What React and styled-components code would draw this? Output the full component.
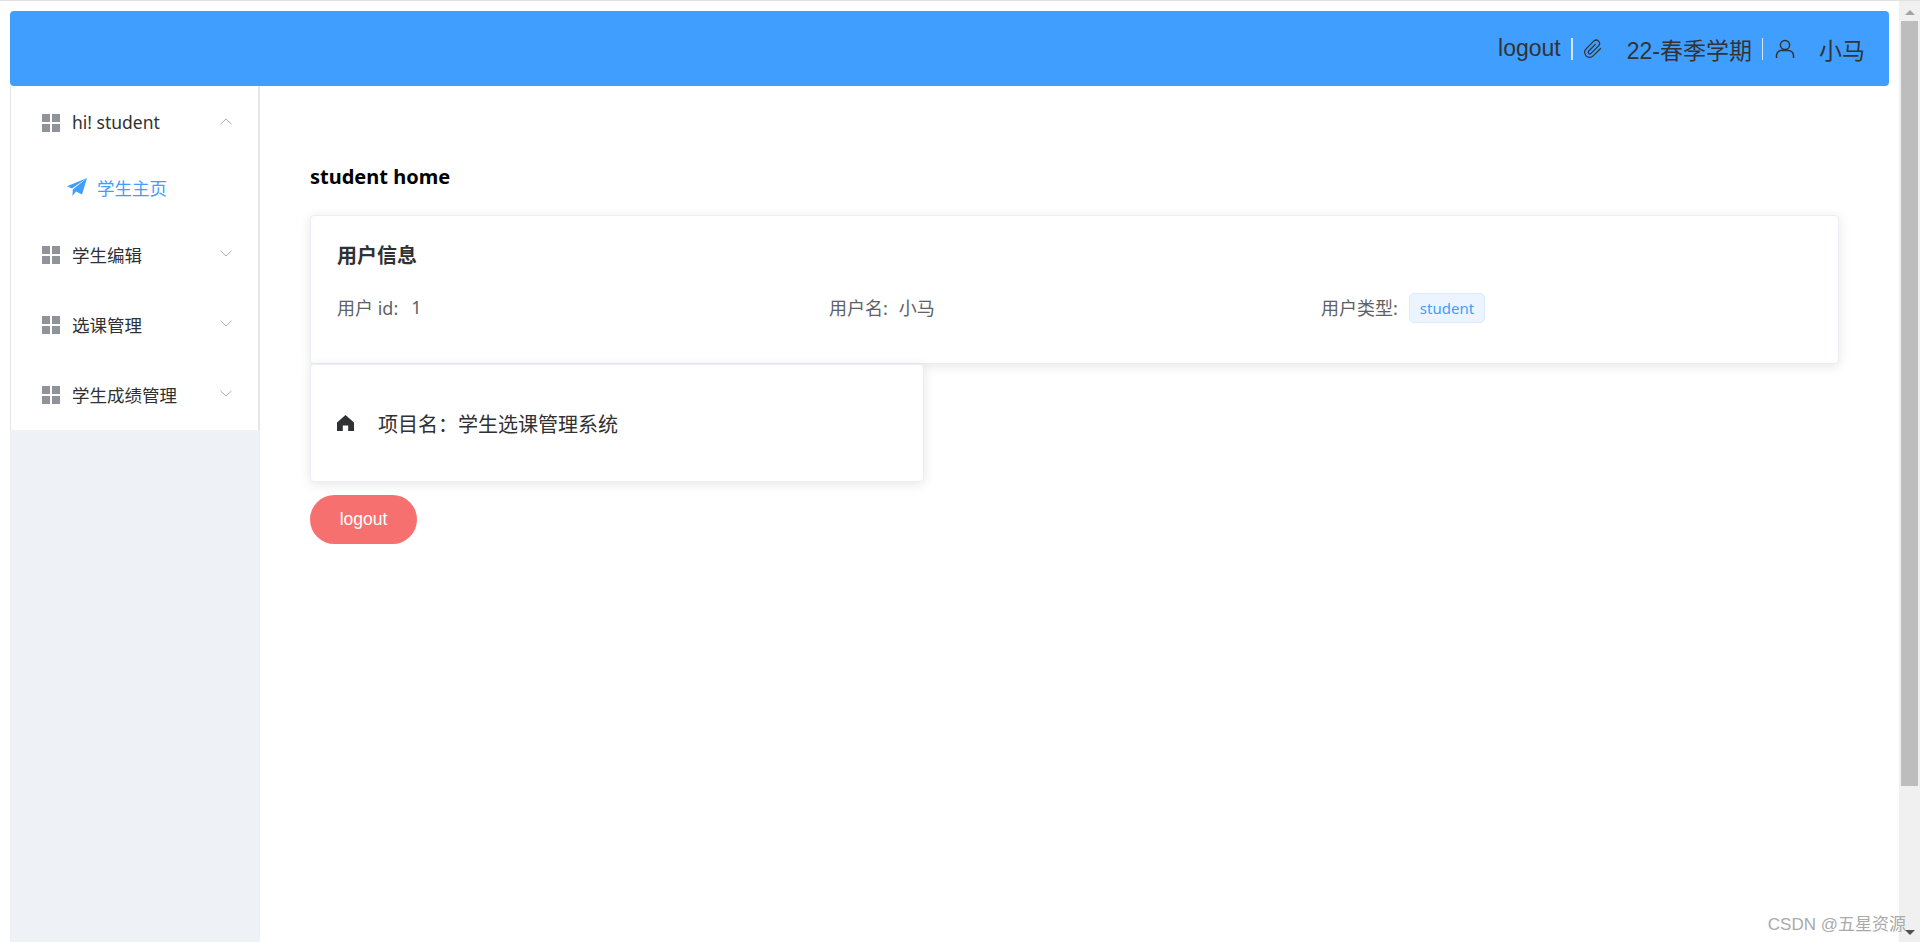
import React from 'react';
import styled, { createGlobalStyle } from 'styled-components';

const CJK = `"Noto Sans", "Noto Sans CJK SC", sans-serif`;
const ARIAL = `"Liberation Sans", "Noto Sans CJK SC", sans-serif`;

const menus = [
    { title: 'hi! student', open: true, children: ['学生主页'] },
    { title: '学生编辑' },
    { title: '选课管理' },
    { title: '学生成绩管理' }
];

const GridIcon = () => (
    <MenuIcon viewBox="0 0 18 18">
        <rect x="0" y="0" width="8" height="8" />
        <rect x="10" y="0" width="8" height="8" />
        <rect x="0" y="10" width="8" height="8" />
        <rect x="10" y="10" width="8" height="8" />
    </MenuIcon>
);

const Chevron = ({ up }) => (
    <ChevronIcon viewBox="0 0 12 7" $up={up}>
        <path d="M0.5 0.8 L6 6 L11.5 0.8" />
    </ChevronIcon>
);

const App = () => (
    <>
        <GlobalStyle />
        <Shell>
            <Page>
                <Header>
                    <span>logout</span>
                    <Divider $w={2} $ml={10} />
                    <HeaderIcon viewBox="0 0 24 24" $ml={10}>
                        <path d="M21.4 11.1l-9.2 9.2a6 6 0 0 1-8.5-8.5l9.2-9.2a4 4 0 0 1 5.7 5.7l-9.2 9.2a2 2 0 0 1-2.8-2.8l8.5-8.5" />
                    </HeaderIcon>
                    <HeaderText $ml={24}>22-春季学期</HeaderText>
                    <Divider $w={1} $ml={10} />
                    <HeaderIcon viewBox="0 0 20 20" $ml={12}>
                        <circle cx="10" cy="6" r="4.6" />
                        <path d="M1.5 19v-2.5a5 5 0 0 1 5-5h7a5 5 0 0 1 5 5V19" />
                    </HeaderIcon>
                    <HeaderText $ml={24}>小马</HeaderText>
                </Header>
                <Content>
                    <Sidebar>
                        <Menu>
                            {menus.map(m => (
                                <li key={m.title}>
                                    <MenuTitle>
                                        <GridIcon />
                                        <MenuLabel>{m.title}</MenuLabel>
                                        <Chevron up={m.open} />
                                    </MenuTitle>
                                    {m.children && m.children.map(c => (
                                        <MenuItem key={c}>
                                            <svg width="20" height="18" viewBox="0 0 20 18" fill="#409eff">
                                                <path d="M20 0 L0 8.2 L5 10.6 Z" />
                                                <path d="M20 0 L5.8 11.4 L5.4 18 L9 13.6 L15 16.6 Z" />
                                            </svg>
                                            <span>{c}</span>
                                        </MenuItem>
                                    ))}
                                </li>
                            ))}
                        </Menu>
                    </Sidebar>
                    <Main>
                        <PageTitle>student home</PageTitle>
                        <InfoCard>
                            <CardTitle>用户信息</CardTitle>
                            <InfoRow>
                                <InfoCell>用户 id:<InfoValue $ml={13}>1</InfoValue></InfoCell>
                                <InfoCell>用户名:<InfoValue $ml={11}>小马</InfoValue></InfoCell>
                                <InfoCell>
                                    用户类型:
                                    <Tag>student</Tag>
                                </InfoCell>
                            </InfoRow>
                        </InfoCard>
                        <ProjectCard>
                            <svg width="17" height="16" viewBox="0 0 17 16" fill="#303133">
                                <path d="M8.5 0 L17 7.4 L17 16 L11.2 16 L11.2 10.4 L5.8 10.4 L5.8 16 L0 16 L0 7.4 Z" />
                            </svg>
                            <span>项目名：学生选课管理系统</span>
                        </ProjectCard>
                        <LogoutButton>logout</LogoutButton>
                    </Main>
                </Content>
                <Watermark>CSDN @五星资源</Watermark>
            </Page>
            <Scrollbar>
                <ArrowUp />
                <Thumb />
                <ArrowDown />
            </Scrollbar>
        </Shell>
    </>
);

const GlobalStyle = createGlobalStyle`
    html, body {
        margin: 0;
        height: 100%;
        overflow: hidden;
        background: #fff;
    }
    #root {
        height: 100%;
    }
`;

const Shell = styled.div`
    display: flex;
    height: 942px;
    box-sizing: border-box;
    border-top: 1px solid #e0e0e0;
`;

const Page = styled.div`
    position: relative;
    flex: 1;
    min-width: 0;
    display: flex;
    flex-direction: column;
    padding: 10px 10px 0;
`;

const Header = styled.header`
    flex: none;
    height: 75px;
    display: flex;
    align-items: center;
    justify-content: flex-end;
    padding-right: 24px;
    background: #409eff;
    border-radius: 4px;
    color: #333;
    font-family: ${ARIAL};
    font-size: 23px;
`;

const HeaderText = styled.span`
    margin-left: ${p => p.$ml}px;
`;

const Divider = styled.i`
    width: ${p => p.$w}px;
    height: 22px;
    margin-left: ${p => p.$ml}px;
    background: #d5e6fb;
`;

const HeaderIcon = styled.svg`
    width: 20px;
    height: 20px;
    margin-left: ${p => p.$ml}px;
    fill: none;
    stroke: #333;
    stroke-width: 1.5;
`;

const Content = styled.div`
    flex: 1;
    display: flex;
    min-height: 0;
`;

const Sidebar = styled.aside`
    flex: none;
    width: 250px;
    background: #eef1f6;
`;

const Menu = styled.ul`
    list-style: none;
    margin: 0;
    padding: 1px 0 0;
    height: 344px;
    box-sizing: border-box;
    background: #fff;
    border-left: 1px solid #e6e6e6;
    border-right: 2px solid #e6e6e6;
    font-family: ${CJK};
    font-size: 17.5px;
    color: #303133;
`;

const MenuTitle = styled.div`
    position: relative;
    height: 70px;
    display: flex;
    align-items: center;
    padding-left: 31px;
`;

const MenuIcon = styled.svg`
    width: 18px;
    height: 18px;
    margin-top: 2px;
    fill: #909399;
    flex: none;
`;

const MenuLabel = styled.span`
    margin-left: 12px;
`;

const ChevronIcon = styled.svg`
    position: absolute;
    right: 26px;
    top: 31px;
    width: 12px;
    height: 7px;
    fill: none;
    stroke: #a9adb3;
    stroke-width: 1;
    transform: ${p => (p.$up ? 'rotate(180deg)' : 'none')};
`;

const MenuItem = styled.div`
    box-sizing: border-box;
    height: 62px;
    padding: 0 0 2px 56px;
    display: flex;
    align-items: center;
    gap: 10px;
    color: #409eff;
`;

const Main = styled.main`
    flex: 1;
    min-width: 0;
    padding: 0 50px;
`;

const PageTitle = styled.h2`
    margin: 0;
    padding-top: 76px;
    height: 53px;
    line-height: 30px;
    font-family: "Noto Sans", sans-serif;
    font-size: 20px;
    font-weight: 700;
    color: #000;
`;

const Card = styled.section`
    box-sizing: border-box;
    background: #fff;
    border: 1px solid #ebeef5;
    border-radius: 4px;
    box-shadow: 0 2px 12px 0 rgba(0, 0, 0, 0.1);
`;

const InfoCard = styled(Card)`
    height: 149px;
    padding: 25px 25px 0 26px;
`;

const CardTitle = styled.h3`
    margin: 0;
    line-height: 30px;
    font-family: ${CJK};
    font-size: 20px;
    font-weight: 700;
    color: #303133;
`;

const InfoRow = styled.div`
    display: grid;
    grid-template-columns: repeat(3, 1fr);
    margin-top: 20px;
`;

const InfoCell = styled.div`
    display: flex;
    align-items: center;
    height: 32px;
    font-family: ${CJK};
    font-size: 18px;
    color: #606266;
    white-space: pre;
`;

const InfoValue = styled.span`
    margin-left: ${p => p.$ml}px;
`;

const Tag = styled.span`
    box-sizing: border-box;
    height: 30px;
    line-height: 28px;
    margin: 1px 0 0 11px;
    padding: 0 10px;
    font-size: 15px;
    color: #409eff;
    background: #ecf5ff;
    border: 1px solid #d9ecff;
    border-radius: 5px;
`;

const ProjectCard = styled(Card)`
    width: 614px;
    height: 118px;
    padding-left: 26px;
    display: flex;
    align-items: center;
    gap: 24px;
    font-family: ${CJK};
    font-size: 20px;
    color: #303133;
`;

const LogoutButton = styled.button`
    display: block;
    width: 107px;
    height: 49px;
    margin-top: 13px;
    padding: 0;
    border: none;
    border-radius: 25px;
    background: #f77070;
    color: #fff;
    font-family: ${ARIAL};
    font-size: 17.5px;
`;

const Watermark = styled.div`
    position: absolute;
    right: -7px;
    bottom: 7px;
    font-family: ${ARIAL};
    font-size: 17px;
    color: #aaa;
`;

const Scrollbar = styled.div`
    flex: none;
    width: 21px;
    display: flex;
    flex-direction: column;
    align-items: center;
    background: #f0f0f0;
`;

const ArrowUp = styled.i`
    flex: none;
    width: 0;
    height: 0;
    margin: 9px 0 6px;
    border-left: 5px solid transparent;
    border-right: 5px solid transparent;
    border-bottom: 5px solid #a3a3a3;
`;

const Thumb = styled.div`
    flex: none;
    width: 17px;
    height: 765px;
    background: #bdbdbd;
`;

const ArrowDown = styled.i`
    flex: none;
    width: 0;
    height: 0;
    margin-top: auto;
    margin-bottom: 7px;
    border-left: 5px solid transparent;
    border-right: 5px solid transparent;
    border-top: 5px solid #505050;
`;

export default App;
